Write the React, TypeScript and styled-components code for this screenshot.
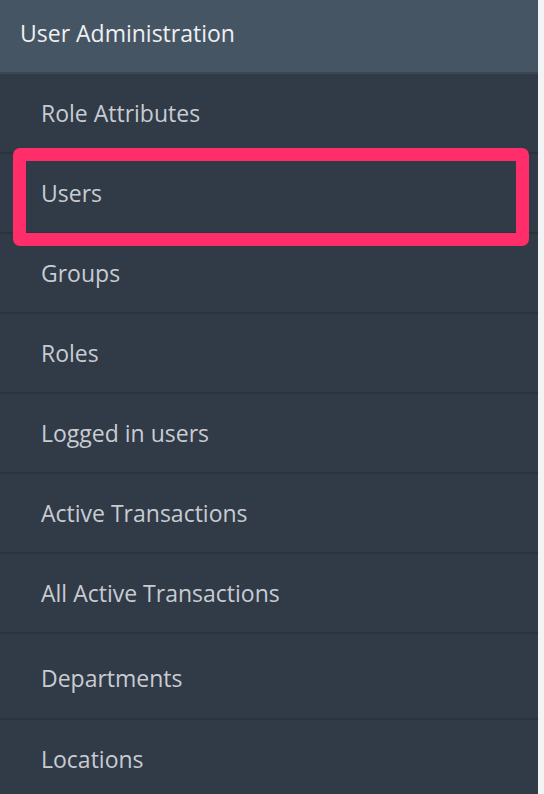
import styled, { createGlobalStyle } from "styled-components";

const GlobalStyle = createGlobalStyle`
  html, body {
    margin: 0;
    padding: 0;
    background: #f2f3f4;
  }
`;

const items = [
  { label: "Role Attributes" },
  { label: "Users", highlighted: true },
  { label: "Groups" },
  { label: "Roles" },
  { label: "Logged in users" },
  { label: "Active Transactions" },
  { label: "All Active Transactions" },
  { label: "Departments", tall: true },
  { label: "Locations" },
];

export default function App() {
  return (
    <>
      <GlobalStyle />
      <Page>
        <Sidebar>
          <Header>User Administration</Header>
          <Menu>
            {items.map((item) => (
              <Row key={item.label} $tall={item.tall}>
                <RowLabel>{item.label}</RowLabel>
                {item.highlighted && <Highlight />}
              </Row>
            ))}
          </Menu>
        </Sidebar>
      </Page>
    </>
  );
}

const Page = styled.div`
  width: 544px;
  height: 794px;
  overflow: hidden;
  display: flex;
  align-items: flex-start;
  background: #f2f3f4;
`;

const Sidebar = styled.div`
  width: 538px;
  min-height: 794px;
  display: flex;
  flex-direction: column;
  flex-shrink: 0;
  background-color: #313a47;
  font-family: "Open Sans", "Lato", sans-serif;
`;

const Header = styled.div`
  flex-shrink: 0;
  box-sizing: border-box;
  height: 74px;
  display: flex;
  align-items: center;
  padding: 0 0 6px 20px;

  font-size: 23px;
  font-weight: 500;
  color: #eef0f2;

  background-color: #465564;
  border-bottom: 2px solid #3a4654;
`;

const Menu = styled.div`
  display: flex;
  flex-direction: column;
`;

const Row = styled.div<{ $tall?: boolean }>`
  position: relative;
  flex-shrink: 0;
  height: ${({ $tall }) => ($tall ? "80px" : "78px")};
  display: flex;
  align-items: center;
  padding: ${({ $tall }) => ($tall ? "4px 0 0 41px" : "0 0 0 41px")};
  box-sizing: content-box;
  border-bottom: 2px solid #2a323c;

  &:last-child {
    border-bottom: none;
  }
`;

const RowLabel = styled.span`
  font-size: 23px;
  font-weight: 500;
  color: #c8ccd2;
`;

const Highlight = styled.div`
  position: absolute;
  left: 13px;
  right: 9px;
  top: -6px;
  bottom: -14px;
  border: 13px solid #ff2d6a;
  border-radius: 7px;
  pointer-events: none;
`;
